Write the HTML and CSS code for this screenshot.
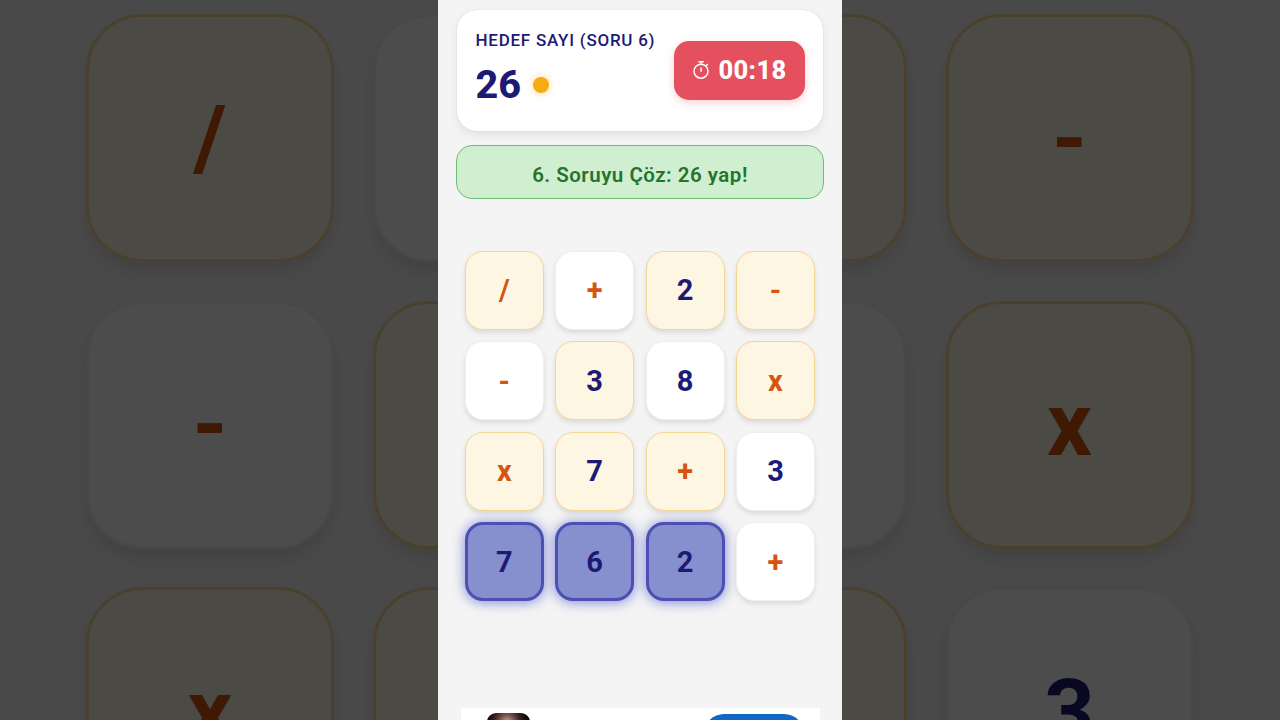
FILE: index.html
```html
<!DOCTYPE html>
<html lang="tr">

<head>
  <meta charset="UTF-8" />
  <meta name="viewport" content="width=device-width, initial-scale=1.0" />
  <title>Hedef Sayı</title>
  <link rel="stylesheet" href="styles.css">
</head>

<body>
  <!-- enlarged, dimmed board behind the phone -->
  <div class="backdrop" aria-hidden="true">
    <div class="board board-large">
      <div class="tile op gold">/</div>
      <div class="tile"></div>
      <div class="tile gold"></div>
      <div class="tile op gold">-</div>
      <div class="tile op">-</div>
      <div class="tile gold"></div>
      <div class="tile"></div>
      <div class="tile op gold">x</div>
      <div class="tile op gold">x</div>
      <div class="tile gold"></div>
      <div class="tile gold"></div>
      <div class="tile">3</div>
    </div>
  </div>

  <main class="phone">
    <header class="target-card">
      <div class="target">
        <div class="target-label">HEDEF SAYI (SORU 6)</div>
        <div class="target-value">26 <span class="dot"></span></div>
      </div>
      <div class="timer">
        <svg class="timer-icon" viewBox="0 0 18 20" fill="none" stroke="currentColor" stroke-width="1.5">
          <circle cx="9" cy="11.2" r="7" />
          <path d="M6.4 1.8h5.4M9.1 2v2.4M9.1 7.4v4.4M14.2 5.6l1.6-1.5" />
        </svg>
        <span>00:18</span>
      </div>
    </header>

    <div class="message"><span>6. Soruyu Çöz: 26 yap!</span></div>

    <div class="board">
      <div class="tile op gold">/</div>
      <div class="tile op">+</div>
      <div class="tile gold">2</div>
      <div class="tile op gold">-</div>

      <div class="tile op">-</div>
      <div class="tile gold">3</div>
      <div class="tile">8</div>
      <div class="tile op gold">x</div>

      <div class="tile op gold">x</div>
      <div class="tile gold">7</div>
      <div class="tile op gold">+</div>
      <div class="tile">3</div>

      <div class="tile selected">7</div>
      <div class="tile selected">6</div>
      <div class="tile selected">2</div>
      <div class="tile op">+</div>
    </div>

    <footer class="ad">
      <div class="ad-thumb"></div>
      <div class="ad-button"></div>
    </footer>
  </main>
</body>

</html>
```

FILE: styles.css
```css
* {
  box-sizing: border-box;
}

body {
  margin: 0;
  width: 1280px;
  height: 720px;
  overflow: hidden;
  display: grid;
  grid-template: 720px / 1280px;
  background: #000;
  font-family: Roboto, "Liberation Sans", sans-serif;
  color: #1c1a75;
}

.backdrop,
.phone {
  grid-area: 1 / 1;
  overflow: hidden;
}

.backdrop {
  background: #f4f4f4;
  padding: 14px 0 0 86px;
  filter: brightness(0.3);
}

.phone {
  justify-self: center;
  width: 404px;
  height: 720px;
  padding: 10px 18px 0;
  display: flex;
  flex-direction: column;
  position: relative;
  background: #f4f4f4;
}

.target-card {
  flex: none;
  height: 121px;
  margin: 0 1px;
  padding: 0 18px 0 18.5px;
  display: flex;
  justify-content: space-between;
  background: #fff;
  border-radius: 20px;
  box-shadow: 0 0 1px rgba(0, 0, 0, 0.2), 0 4px 10px rgba(0, 0, 0, 0.08);
}

.target-label {
  padding-top: 20px;
  font-size: 17px;
  line-height: 20px;
  font-weight: 500;
  letter-spacing: 0.75px;
  white-space: nowrap;
}

.target-value {
  display: flex;
  align-items: center;
  gap: 12px;
  margin-top: 11px;
  font-size: 39.5px;
  line-height: 48px;
  font-weight: 800;
}

.dot {
  width: 16px;
  height: 16px;
  border-radius: 50%;
  background: #f7ab12;
  box-shadow: 0 0 9px rgba(249, 171, 12, 0.45);
}

.timer {
  width: 131px;
  height: 59px;
  margin-top: 30.5px;
  display: flex;
  align-items: center;
  justify-content: center;
  gap: 8px;
  color: #fff;
  background: #e4505d;
  border-radius: 15px;
  box-shadow: 0 3px 9px rgba(228, 80, 93, 0.25);
  font-size: 25.5px;
  font-weight: 800;
  letter-spacing: 0.4px;
}

.timer-icon {
  width: 18px;
  height: 20px;
}

.message {
  flex: none;
  height: 54px;
  margin-top: 14px;
  display: flex;
  justify-content: center;
  align-items: flex-start;
  padding-top: 19px;
  color: #25732c;
  background: #d0eed0;
  border: 1px solid #6fbd74;
  border-radius: 16px;
  font-size: 20.5px;
  font-weight: 600;
  letter-spacing: 0.5px;
}

.message span {
  height: 20px;
  line-height: 20px;
  overflow: hidden;
}

.board {
  flex: none;
  display: grid;
  grid-template-columns: repeat(4, 79px);
  grid-auto-rows: 79px;
  gap: 11.5px 11.4px;
  margin: 51.5px 0 0 8.8px;
}

.tile {
  display: flex;
  align-items: center;
  justify-content: center;
  background: #fff;
  border: 1px solid #efeff1;
  border-radius: 18px;
  box-shadow: 0 3px 5px rgba(0, 0, 0, 0.1);
  font-size: 29px;
  font-weight: 700;
}

.tile.op {
  color: #d6540e;
}

.tile.gold {
  background: #fdf6e3;
  border-color: #f3d795;
}

.tile.selected {
  background: #8690cf;
  border: 3px solid #4e4fb3;
  box-shadow: 0 1px 12px 1px rgba(70, 82, 200, 0.6);
}

.board-large {
  grid-template-columns: repeat(4, 248px);
  grid-auto-rows: 248px;
  gap: 38.5px;
  margin: 0;
}

.board-large .tile {
  border-width: 3px;
  border-radius: 56px;
  box-shadow: 0 10px 16px rgba(0, 0, 0, 0.1);
  font-size: 89px;
}

/* ad banner, cut off by the bottom of the screen */
.ad {
  flex: none;
  height: 57px;
  margin: 107px 4px 0 5px;
  padding: 5px 16px 0 26px;
  display: flex;
  justify-content: space-between;
  background: #fff;
}

.ad-thumb {
  width: 43px;
  height: 43px;
  border-radius: 9px;
  background: radial-gradient(circle at 20px 9px, #c9a296 0, #7b5350 7px, #3a2325 13px, #090708 20px);
}

.ad-button {
  width: 100px;
  height: 40px;
  margin-top: 1px;
  border-radius: 20px;
  background: #1266c4;
}
```
